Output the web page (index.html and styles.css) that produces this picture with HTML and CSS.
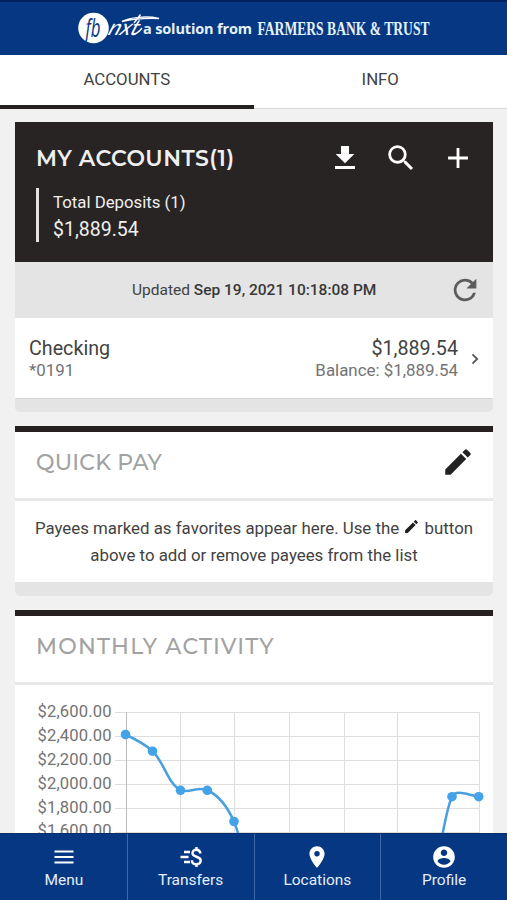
FILE: index.html
```html
<!DOCTYPE html>
<html lang="en">
<head>
    <meta charset="utf-8">
    <title>My Accounts</title>
    <meta name="viewport" content="width=device-width, initial-scale=1">
    <link rel="stylesheet" href="styles.css">
</head>

<body>
    <header class="top-bar">
        <svg class="logo" width="370" height="40" viewBox="74 8 370 40">
            <circle cx="93.500" cy="28" r="15.300" fill="#fff"/>
            <text class="logo-fb" x="85.500" y="36.500" textLength="15" lengthAdjust="spacingAndGlyphs">fb</text>
            <text class="logo-nxt" transform="translate(107 34.500) skewX(-22)" textLength="30" lengthAdjust="spacingAndGlyphs">nxt</text>
            <path d="M122 21.500C130 17.500 146 15.500 159 18.500C147 18 133 19 122 21.500zM140.500 14.500L134 23M132 33.500Q137 35 142 28" fill="none" stroke="#fff" stroke-width="1.400"/>
            <text class="logo-small" x="143" y="34" textLength="109">a solution from</text>
            <text class="logo-bank" x="257.500" y="34.500" textLength="172" lengthAdjust="spacingAndGlyphs">FARMERS BANK &amp; TRUST</text>
        </svg>
    </header>

    <nav class="tabs">
        <a class="tab active">ACCOUNTS</a>
        <a class="tab">INFO</a>
    </nav>

    <main class="content">
        <section class="card">
            <div class="accounts-head">
                <div class="title-row">
                    <h2 class="title title-accounts">MY ACCOUNTS(1)</h2>
                    <div class="actions">
                        <svg width="32" height="32" viewBox="0 0 24 24"><path d="M19 9h-4V3H9v6H5l7 7 7-7zM4.500 18v2.200h15V18h-15z" fill="#fff"/></svg>
                        <svg width="34" height="34" viewBox="0 0 24 24"><path d="M15.500 14h-.79l-.28-.27A6.471 6.471 0 0 0 16 9.500 6.500 6.500 0 1 0 9.500 16c1.610 0 3.090-.59 4.230-1.570l.27.28v.79l5 4.990L20.490 19l-4.990-5zm-6 0C7.010 14 5 11.990 5 9.500S7.010 5 9.500 5 14 7.010 14 9.500 11.990 14 9.500 14z" fill="#fff"/></svg>
                        <svg width="34" height="34" viewBox="0 0 24 24"><path d="M19 13h-6v6h-2v-6H5v-2h6V5h2v6h6v2z" fill="#fff"/></svg>
                    </div>
                </div>
                <div class="totals">
                    <div class="totals-label">Total Deposits (1)</div>
                    <div class="totals-value">$1,889.54</div>
                </div>
            </div>
            <div class="updated">
                <span>Updated <b>Sep 19, 2021 10:18:08 PM</b></span>
                <svg class="refresh" width="34" height="34" viewBox="0 0 24 24"><path d="M17.650 6.350A7.958 7.958 0 0 0 12 4a8 8 0 1 0 7.730 10h-2.080A5.990 5.990 0 0 1 12 18c-3.310 0-6-2.690-6-6s2.690-6 6-6c1.660 0 3.140.69 4.220 1.780L13 11h7V4l-2.350 2.350z" fill="#5c5c5c"/></svg>
            </div>
            <div class="account">
                <div class="account-name">
                    <div class="big">Checking</div>
                    <div class="small">*0191</div>
                </div>
                <div class="account-amount">
                    <div class="big">$1,889.54</div>
                    <div class="small">Balance: $1,889.54</div>
                </div>
                <svg class="chevron" width="8" height="12" viewBox="0 0 8 12"><path d="M1.500 1.300L6.200 6L1.500 10.700" fill="none" stroke="#555" stroke-width="1.800"/></svg>
            </div>
            <div class="card-foot"></div>
        </section>

        <section class="card bordered">
            <div class="card-head">
                <h2 class="title title-pay">QUICK PAY</h2>
                <svg width="34" height="34" viewBox="0 0 24 24"><path d="M3 17.250V21h3.750L17.810 9.940l-3.750-3.750L3 17.250zM20.710 7.040a.996.996 0 0 0 0-1.410l-2.340-2.340a.996.996 0 0 0-1.410 0l-1.830 1.830 3.750 3.750 1.830-1.830z" fill="#222"/></svg>
            </div>
            <p class="payees">Payees marked as favorites appear here. Use the <svg class="pencil" width="17" height="17" viewBox="0 0 24 24"><path d="M3 17.250V21h3.750L17.810 9.940l-3.750-3.750L3 17.250zM20.710 7.040a.996.996 0 0 0 0-1.410l-2.340-2.340a.996.996 0 0 0-1.410 0l-1.830 1.830 3.750 3.750 1.830-1.830z" fill="#222"/></svg> button<br>above to add or remove payees from the list</p>
            <div class="card-foot"></div>
        </section>

        <section class="card bordered">
            <div class="card-head">
                <h2 class="title title-activity">MONTHLY ACTIVITY</h2>
            </div>
            <svg class="chart" width="478" height="200" viewBox="15 685 478 200">
                <g stroke="#dedede" stroke-width="1">
                    <path d="M115 712.500H480M115 736.500H480M115 760.500H480M115 784.500H480M115 808.500H480M115 832.500H480" fill="none"/>
                    <path d="M180.500 712V880M234.500 712V880M289.500 712V880M344.500 712V880M397.500 712V880M479.500 712V880" fill="none"/>
                    <path d="M126.500 712V880" stroke="#bbb"/>
                </g>
                <g class="axis">
                    <text x="37.500" y="717" textLength="74">$2,600.00</text>
                    <text x="37.500" y="741" textLength="74">$2,400.00</text>
                    <text x="37.500" y="765" textLength="74">$2,200.00</text>
                    <text x="37.500" y="788.500" textLength="74">$2,000.00</text>
                    <text x="37.500" y="812.500" textLength="74">$1,800.00</text>
                    <text x="37.500" y="836" textLength="74">$1,600.00</text>
                </g>
                <path d="M125.500 734.500C137 740 145 744 152.500 751C164 762 168 784 180.500 790C189 794 197 786 207 790C220 796 228 808 234 821.500C238 831 241 843 244 856M438 856C443 835 446 810 452 796.500C456 789 468 795 479 796.500" fill="none" stroke="#4a9fdd" stroke-width="2.500"/>
                <g fill="#43a2e8">
                    <circle cx="125.500" cy="734.500" r="4.800"/>
                    <circle cx="152.500" cy="751.200" r="4.800"/>
                    <circle cx="180.500" cy="790.300" r="4.800"/>
                    <circle cx="207.300" cy="790.300" r="4.800"/>
                    <circle cx="234" cy="821.500" r="4.800"/>
                    <circle cx="452" cy="796.700" r="4.800"/>
                    <circle cx="478.700" cy="796.700" r="4.800"/>
                </g>
            </svg>
        </section>
    </main>

    <nav class="bottom-nav">
        <a class="nav-item">
            <svg width="26" height="26" viewBox="0 0 26 26"><path d="M3.500 7.500h19M3.500 13h19M3.500 18.500h19" stroke="#fff" stroke-width="2.200"/></svg>
            <span>Menu</span>
        </a>
        <a class="nav-item">
            <svg width="26" height="26" viewBox="0 0 26 26"><path d="M6 8h6M2.500 13h8M6 18h6M22.500 9.500C22 6.500 20 5.700 18.500 5.700C16 5.700 14.500 7.100 14.500 9.200C14.500 14 22.700 11.500 22.700 16.600C22.700 19 20.700 20.300 18.500 20.300C16 20.300 14 19 13.900 16.200M18.500 3v3M18.500 20v3" fill="none" stroke="#fff" stroke-width="2.400"/></svg>
            <span>Transfers</span>
        </a>
        <a class="nav-item">
            <svg width="26" height="26" viewBox="0 0 24 24"><path d="M12 2C8.130 2 5 5.130 5 9c0 5.250 7 13 7 13s7-7.750 7-13c0-3.870-3.130-7-7-7zm0 9.500a2.500 2.500 0 0 1 0-5 2.500 2.500 0 0 1 0 5z" fill="#fff"/></svg>
            <span>Locations</span>
        </a>
        <a class="nav-item">
            <svg width="26" height="26" viewBox="0 0 24 24"><path d="M12 2C6.480 2 2 6.480 2 12s4.480 10 10 10 10-4.480 10-10S17.520 2 12 2zm0 3c1.660 0 3 1.340 3 3s-1.340 3-3 3-3-1.340-3-3 1.340-3 3-3zm0 14.200a7.200 7.200 0 0 1-6-3.220c.03-1.990 4-3.080 6-3.080 1.990 0 5.970 1.090 6 3.080a7.200 7.200 0 0 1-6 3.220z" fill="#fff"/></svg>
            <span>Profile</span>
        </a>
    </nav>
</body>
</html>
```
FILE: styles.css
```css
* {
    box-sizing: border-box;
}
body {
    margin: 0;
    height: 900px;
    overflow: hidden;
    display: flex;
    flex-direction: column;
    background-color: #f1f1f1;
    color: #424242;
    font-family: Roboto, sans-serif;
}
.top-bar {
    flex: none;
    height: 55px;
    padding-top: 6px;
    border-top: 2px solid #03205f;
    background-color: #053782;
}
.logo {
    display: block;
    margin-left: 74px;
}
.logo-fb {
    font: italic 25px "Open Sans", sans-serif;
    fill: #053782;
}
.logo-nxt {
    font: italic 400 22px Lato, sans-serif;
    fill: #fff;
}
.logo-small {
    font: bold 14.5px "Open Sans", sans-serif;
    fill: #e4f2fc;
}
.logo-bank {
    font: bold 18px "Liberation Serif", serif;
    fill: #e4f2fc;
}
.tabs {
    flex: none;
    display: flex;
    height: 54px;
    background-color: #fff;
}
.tab {
    flex: 1;
    padding-top: 14px;
    border-bottom: 1px solid #dcdcdc;
    font-size: 16.8px;
    line-height: 20px;
    text-align: center;
}
.tab.active {
    border-bottom: 4px solid #252121;
}
.content {
    flex: 1;
    min-height: 0;
    overflow: hidden;
    padding: 13px 14px 0 15px;
}
.card {
    margin-bottom: 14px;
}
.bordered {
    border-top: 6px solid #252121;
    background-color: #fff;
}
.accounts-head {
    height: 140px;
    padding: 19px 18px 0 21px;
    background-color: #282423;
    color: #efefef;
}
.title-row {
    display: flex;
    align-items: center;
    justify-content: space-between;
    height: 34px;
}
.title {
    margin: 0;
    padding-top: 2px;
    font-family: Montserrat, Lato, sans-serif;
    font-size: 22px;
    font-weight: 500;
    line-height: 28px;
    white-space: nowrap;
}
.title-accounts {
    padding-top: 1px;
    font-weight: 600;
    letter-spacing: 0.45px;
}
.title-pay {
    letter-spacing: 0.2px;
}
.title-activity {
    letter-spacing: 1.2px;
}
.actions {
    display: flex;
    align-items: center;
    gap: 23px;
}
.totals {
    height: 54px;
    margin-top: 13px;
    padding: 1px 0 0 14px;
    border-left: 3px solid #e3e3e3;
}
.totals-label {
    font-size: 16.8px;
    line-height: 27px;
}
.totals-value {
    font-size: 19.5px;
    line-height: 27px;
}
.updated {
    display: flex;
    align-items: center;
    height: 56px;
    padding: 0 11px 0 117px;
    justify-content: space-between;
    background-color: #e4e4e4;
    font-size: 15.5px;
    white-space: nowrap;
}
.updated b {
    font-weight: 500;
    color: #383838;
}
.account {
    display: flex;
    align-items: center;
    height: 80px;
    padding: 1px 14px 0;
    background-color: #fff;
}
.account-amount {
    margin-left: auto;
    text-align: right;
}
.big {
    font-size: 19.7px;
    line-height: 23px;
}
.small {
    font-size: 16.9px;
    line-height: 20px;
    color: #737373;
}
.chevron {
    margin-left: 13px;
}
.card-foot {
    height: 14px;
    border-top: 1px solid #d6d6d6;
    border-radius: 0 0 5px 5px;
    background-color: #e4e4e4;
}
.bordered .card-foot {
    border-top-color: #e4e4e4;
}
.bordered:has(.card-foot) {
    border-radius: 0 0 5px 5px;
}
.card-head {
    display: flex;
    align-items: center;
    justify-content: space-between;
    height: 69px;
    padding: 0 18px 7px 21px;
    border-bottom: 3px solid #e8e8e8;
    color: #a2a2a2;
}
.payees {
    height: 81px;
    margin: 0;
    padding-top: 14px;
    font-size: 16.85px;
    line-height: 27px;
    text-align: center;
    white-space: nowrap;
}
.pencil {
    vertical-align: -1px;
}
.chart {
    display: block;
}
.axis {
    font-size: 16.6px;
    fill: #737373;
}
.bottom-nav {
    flex: none;
    display: flex;
    height: 67px;
    padding-left: 1px;
    background-color: #053782;
    border-top: 1px solid #0b2c66;
}
.nav-item {
    flex: 1;
    display: flex;
    flex-direction: column;
    align-items: center;
    padding-top: 10px;
    color: #e6eefb;
    font-size: 15.5px;
    line-height: 20px;
}
.nav-item + .nav-item {
    border-left: 1px solid #3e68a6;
}
```
